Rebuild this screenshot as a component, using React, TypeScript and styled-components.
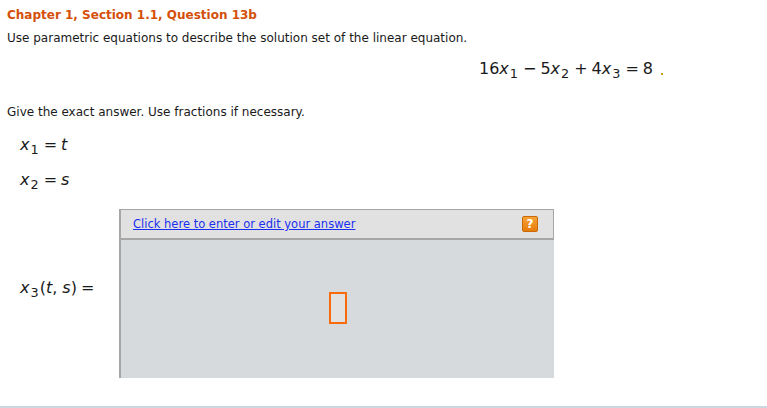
import React from "react";
import styled, { createGlobalStyle } from "styled-components";

const Global = createGlobalStyle`
  html, body { margin: 0; padding: 0; background: #ffffff; }
  body { font-family: "DejaVu Sans", Verdana, sans-serif; color: #1a1a1a; }
`;

const Page = styled.div`
  width: 767px;
  height: 408px;
  box-sizing: border-box;
  display: flex;
  flex-direction: column;
  border-bottom: 2px solid #cdd7e2;
`;

const Header = styled.div`
  padding: 7px 0 0 7px;
`;

const Title = styled.div`
  font-size: 12px;
  font-weight: bold;
  color: #d4500a;
  line-height: 17px;
`;

const Prompt = styled.div`
  font-size: 12px;
  line-height: 17px;
  margin-top: 6px;
`;

const EquationRow = styled.div`
  display: flex;
  justify-content: flex-end;
  align-items: baseline;
  padding-right: 104px;
  margin-top: 10px;
  font-size: 16px;
  line-height: 24px;
`;

const Var = styled.span`
  font-style: italic;
`;

const Sub = styled.sub`
  font-size: 0.8em;
  vertical-align: -0.35em;
  line-height: 0;
  margin: 0 1px;
`;

const Op = styled.span`
  margin: 0 4px;
`;

const Dot = styled.span`
  display: inline-block;
  width: 2px;
  height: 2px;
  background: #d4a017;
  margin-left: 8px;
  align-self: flex-end;
  margin-bottom: 6px;
`;

const Instruction = styled.div`
  font-size: 12px;
  line-height: 17px;
  padding-left: 7px;
  margin-top: 23px;
`;

const MathLine = styled.div<{ $gap: number }>`
  font-size: 16px;
  line-height: 22px;
  padding-left: 20px;
  margin-top: ${(p) => p.$gap}px;
`;

const AnswerRow = styled.div`
  display: flex;
  align-items: center;
  margin-top: 18px;
`;

const AnswerLabel = styled.div`
  width: 119px;
  box-sizing: border-box;
  padding-left: 20px;
  padding-bottom: 12px;
  font-size: 16px;
  line-height: 22px;
  white-space: nowrap;
`;

const AnswerBox = styled.div`
  width: 435px;
  height: 169px;
  display: flex;
  flex-direction: column;
  border-left: 2px solid #a6a6a6;
  box-sizing: border-box;
`;

const BoxHeader = styled.div`
  height: 31px;
  box-sizing: border-box;
  background: #e1e1e1;
  border-top: 1px solid #a6a6a6;
  border-right: 1px solid #a6a6a6;
  border-bottom: 2px solid #a6a6a6;
  display: flex;
  align-items: center;
  justify-content: space-between;
  padding: 0 15px 0 12px;
`;

const EditLink = styled.a`
  font-size: 11.5px;
  color: #1a2ff0;
  text-decoration: underline;
  cursor: pointer;
`;

const HelpIcon = styled.span`
  width: 16px;
  height: 16px;
  box-sizing: border-box;
  border-radius: 2px;
  background: linear-gradient(#f7a236, #e77c0c);
  border: 1px solid #c96a06;
  color: #ffffff;
  font-weight: bold;
  font-size: 12px;
  line-height: 14px;
  text-align: center;
`;

const BoxBody = styled.div`
  flex: 1;
  background: #d7dadd;
  display: flex;
  justify-content: center;
  padding-top: 52px;
`;

const InputSlot = styled.div`
  width: 18px;
  height: 32px;
  box-sizing: border-box;
  border: 2px solid #f76b0a;
  background: #e1e1e1;
  margin-left: 1px;
`;

export default function App() {
  return (
    <>
      <Global />
      <Page>
        <Header>
          <Title>Chapter 1, Section 1.1, Question 13b</Title>
          <Prompt>Use parametric equations to describe the solution set of the linear equation.</Prompt>
        </Header>
        <EquationRow>
          <span>
            16<Var>x</Var>
            <Sub>1</Sub>
            <Op>−</Op>5<Var>x</Var>
            <Sub>2</Sub>
            <Op>+</Op>4<Var>x</Var>
            <Sub>3</Sub>
            <Op>=</Op>8
          </span>
          <Dot />
        </EquationRow>
        <Instruction>Give the exact answer. Use fractions if necessary.</Instruction>
        <MathLine $gap={13}>
          <Var>x</Var>
          <Sub>1</Sub>
          <Op>=</Op>
          <Var>t</Var>
        </MathLine>
        <MathLine $gap={13}>
          <Var>x</Var>
          <Sub>2</Sub>
          <Op>=</Op>
          <Var>s</Var>
        </MathLine>
        <AnswerRow>
          <AnswerLabel>
            <Var>x</Var>
            <Sub>3</Sub>(<Var>t</Var>, <Var>s</Var>)<Op>=</Op>
          </AnswerLabel>
          <AnswerBox>
            <BoxHeader>
              <EditLink>Click here to enter or edit your answer</EditLink>
              <HelpIcon>?</HelpIcon>
            </BoxHeader>
            <BoxBody>
              <InputSlot />
            </BoxBody>
          </AnswerBox>
        </AnswerRow>
      </Page>
    </>
  );
}
